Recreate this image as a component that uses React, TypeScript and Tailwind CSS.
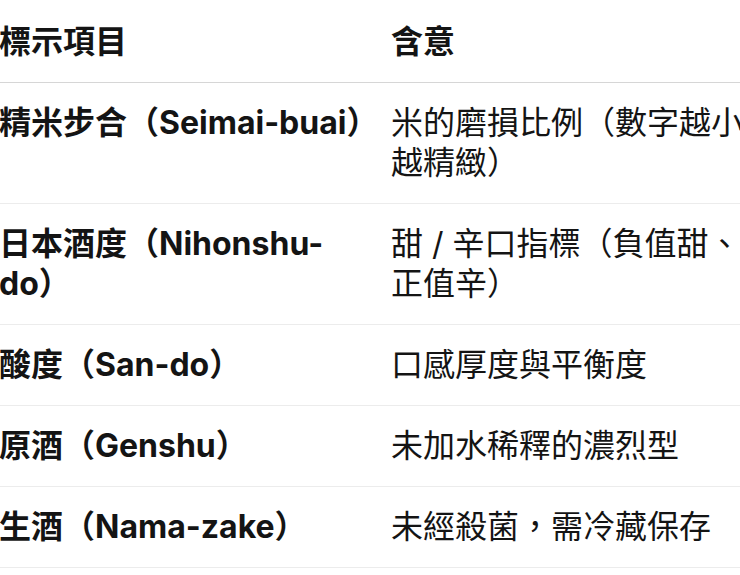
const ROWS: { term: string; meaning: string }[] = [
  { term: "精米步合（Seimai-buai）", meaning: "米的磨損比例（數字越小越精緻）" },
  { term: "日本酒度（Nihonshu-do）", meaning: "甜 / 辛口指標（負值甜、正值辛）" },
  { term: "酸度（San-do）", meaning: "口感厚度與平衡度" },
  { term: "原酒（Genshu）", meaning: "未加水稀釋的濃烈型" },
  { term: "生酒（Nama-zake）", meaning: "未經殺菌，需冷藏保存" },
];

const FONT = "font-['Inter','Noto_Sans_CJK_TC',sans-serif]";

export default function App() {
  return (
    <div className={`h-[575px] w-[740px] overflow-hidden bg-white text-[32px] leading-[40px] text-[#141414] ${FONT}`}>
      <div className="-ml-px w-[820px]">
        <div className="grid grid-cols-[392px_428px] border-b border-[#d6d6d6] pb-5 pt-[22px] font-bold">
          <div className="pr-[22px]">標示項目</div>
          <div className="pr-[58px]">含意</div>
        </div>
        {ROWS.map((row) => (
          <div key={row.term} className="grid grid-cols-[392px_428px] border-b border-[#ececec] py-5">
            <div className="pr-[22px] font-bold">{row.term}</div>
            <div className="pr-[58px]">{row.meaning}</div>
          </div>
        ))}
      </div>
    </div>
  );
}
